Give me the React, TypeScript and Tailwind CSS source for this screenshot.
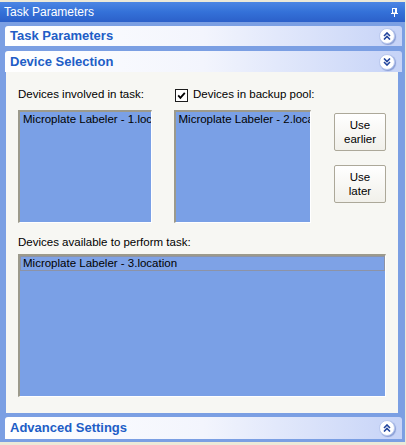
import React from 'react';

const FONT = { fontFamily: '"Liberation Sans", Arial, sans-serif' };

// round white button with a double chevron, as in the XP task pane headers
const ChevronButton: React.FC<{ up: boolean }> = ({ up }) => (
    <div className="w-[16px] h-[16px] rounded-full bg-white border border-[#b9c8ee] shadow-[1px_1px_1px_rgba(60,90,170,0.45)] flex items-center justify-center">
        <svg width="8" height="8" viewBox="0 0 8 8" className={up ? '' : 'rotate-180'}>
            <path d="M1 4 L4 1 L7 4" fill="none" stroke="#21449c" strokeWidth="1.6" />
            <path d="M1 7.5 L4 4.5 L7 7.5" fill="none" stroke="#21449c" strokeWidth="1.6" />
        </svg>
    </div>
);

const SectionHeader: React.FC<{ title: string; up: boolean; h: string }> = ({ title, up, h }) => (
    <div className={`${h} flex items-center justify-between pl-[5px] pr-[7px] rounded-t-[3px] bg-gradient-to-r from-white via-[#f3f5fd] to-[#c6d3f7]`}>
        <span className="text-[13px] font-bold text-[#215dc6]">{title}</span>
        <ChevronButton up={up} />
    </div>
);

const ListBox: React.FC<{ className: string; items: string[]; focused?: boolean }> = ({ className, items, focused }) => (
    <div className={`${className} bg-[#7aa0e6] border-t-2 border-l-2 border-t-[#9c9a8c] border-l-[#9c9a8c] border-r border-b border-r-white border-b-white overflow-hidden`}>
        {items.map(item => (
            <div
                key={item}
                className={`h-[15px] px-[2px] text-[11.5px] leading-[13px] text-black whitespace-nowrap ${focused ? 'border border-[#8d93a6] bg-[#7ea2e6]' : 'border border-transparent'}`}
            >
                {item}
            </div>
        ))}
    </div>
);

const XpButton: React.FC<{ lines: string[] }> = ({ lines }) => (
    <div className="w-[52px] h-[38px] border border-[#aca899] rounded-[2px] bg-gradient-to-b from-white to-[#f1f0ea] flex flex-col items-center justify-center text-[11.5px] leading-[14px] text-black">
        {lines.map(l => <span key={l}>{l}</span>)}
    </div>
);

const App: React.FC = () => {
    return (
        <div className="w-[406px] h-[445px] bg-[#ece9d8] pt-[2px] pb-[3px] pr-[1px] flex flex-col overflow-hidden" style={FONT}>
            {/* window title bar */}
            <div className="h-[20px] flex items-center justify-between pl-[4px] pr-[7px] bg-gradient-to-b from-[#4c86e4] via-[#3471d8] to-[#2c60c9]">
                <span className="text-[12px] text-white">Task Parameters</span>
                <svg width="7" height="9" viewBox="0 0 7 9">
                    <rect x="0" y="5" width="7" height="1" fill="white" />
                    <rect x="1.5" y="0.5" width="4" height="4.5" fill="none" stroke="white" strokeWidth="1" />
                    <rect x="4" y="1" width="1" height="4" fill="white" />
                    <rect x="3" y="6" width="1" height="3" fill="white" />
                </svg>
            </div>

            {/* task pane */}
            <div className="flex-1 flex flex-col bg-[#7b9fe3] pl-[5px] pr-[3px] pt-[4px] pb-[2px]">
                <SectionHeader title="Task Parameters" up h="h-[20px]" />
                <div className="mt-[5px]">
                    <SectionHeader title="Device Selection" up={false} h="h-[21px]" />
                </div>

                <div className="ml-[1px] mr-[4px] bg-[#f7f7f3] px-[12px] pt-[16px] pb-[16px] text-[11.5px] text-black">
                    <div className="h-[14px] flex items-center">
                        <span className="w-[157px]">Devices involved in task:</span>
                        <div className="w-[13px] h-[13px] border border-[#1c1c1c] bg-white flex items-center justify-center">
                            <svg width="9" height="9" viewBox="0 0 9 9">
                                <path d="M1.2 4.4 L3.4 6.8 L7.8 1.8" fill="none" stroke="#000" strokeWidth="1.8" />
                            </svg>
                        </div>
                        <span className="ml-[5px]">Devices in backup pool:</span>
                    </div>

                    <div className="mt-[8px] flex">
                        <ListBox className="w-[134px] h-[113px]" items={['Microplate Labeler - 1.location']} />
                        <ListBox className="ml-[22px] w-[138px] h-[113px]" items={['Microplate Labeler - 2.location']} />
                        <div className="ml-[23px] pt-[3px] flex flex-col gap-[14px]">
                            <XpButton lines={['Use', 'earlier']} />
                            <XpButton lines={['Use', 'later']} />
                        </div>
                    </div>

                    <div className="mt-[13px] leading-[13px]">Devices available to perform task:</div>
                    <ListBox className="mt-[5px] w-full h-[143px]" items={['Microplate Labeler - 3.location']} focused />
                </div>

                <div className="mt-[4px]">
                    <SectionHeader title="Advanced Settings" up h="h-[22px]" />
                </div>
            </div>
        </div>
    );
};

export default App;
